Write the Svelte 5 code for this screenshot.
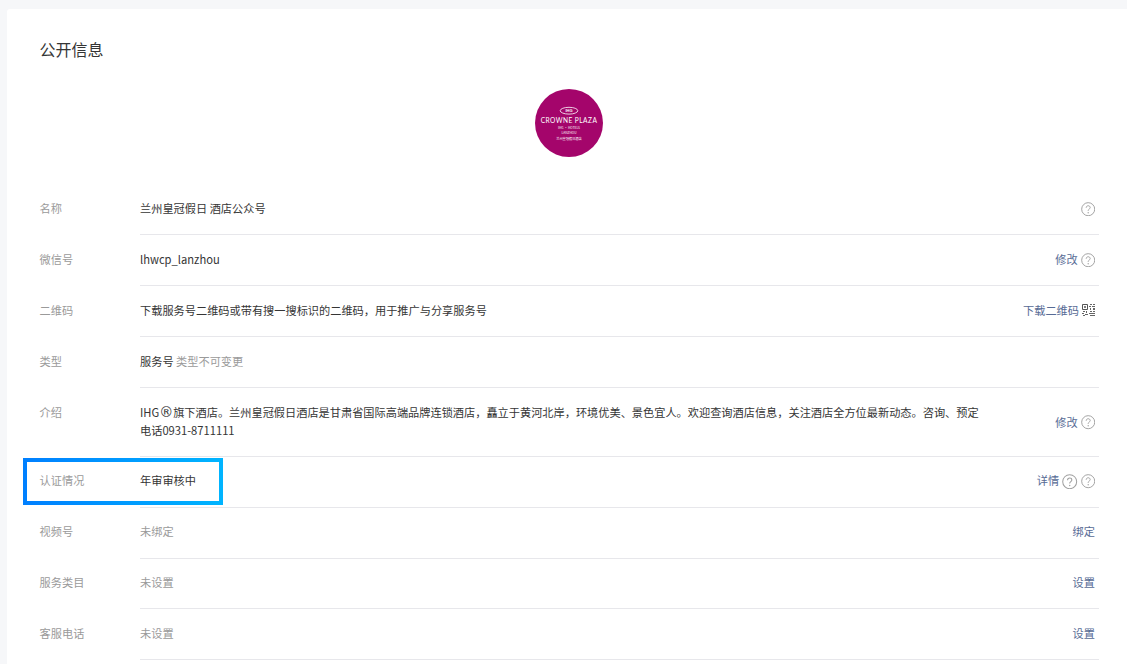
<script lang="ts">
  type Row = {
    label: string
    value: string
    muted?: boolean
    note?: string
    action?: string
    helps?: number
    qr?: boolean
    tall?: boolean
    boxed?: boolean
  }

  const rows: Row[] = [
    { label: '名称', value: '兰州皇冠假日 酒店公众号', helps: 1 },
    { label: '微信号', value: 'lhwcp_lanzhou', action: '修改', helps: 1 },
    { label: '二维码', value: '下载服务号二维码或带有搜一搜标识的二维码，用于推广与分享服务号', action: '下载二维码', qr: true },
    { label: '类型', value: '服务号', note: '类型不可变更' },
    {
      label: '介绍',
      value: 'IHG®旗下酒店。兰州皇冠假日酒店是甘肃省国际高端品牌连锁酒店，矗立于黄河北岸，环境优美、景色宜人。欢迎查询酒店信息，关注酒店全方位最新动态。咨询、预定电话0931-8711111',
      action: '修改',
      helps: 1,
      tall: true
    },
    { label: '认证情况', value: '年审审核中', action: '详情', helps: 2, boxed: true },
    { label: '视频号', value: '未绑定', muted: true, action: '绑定' },
    { label: '服务类目', value: '未设置', muted: true, action: '设置' },
    { label: '客服电话', value: '未设置', muted: true, action: '设置' }
  ]
</script>

<main class="page">
  <section class="card">
    <h2>公开信息</h2>

    <div class="avatar">
      <svg width="68" height="68" viewBox="0 0 68 68" role="img" aria-label="Crowne Plaza">
        <circle cx="34" cy="34" r="34" fill="#a4056b" />
        <ellipse cx="34" cy="21.7" rx="8.8" ry="3.4" fill="none" stroke="#fff" stroke-width="0.8" />
        <text x="34" y="23.2" class="logo-mark">IHG</text>
        <text x="34" y="33.6" class="logo-name">CROWNE PLAZA</text>
        <text x="34" y="39.6" class="logo-small">IHG · HOTELS</text>
        <text x="34" y="45.2" class="logo-small">LANZHOU</text>
        <text x="34" y="50.5" class="logo-small">兰州皇冠假日酒店</text>
      </svg>
    </div>

    <div class="list">
      {#each rows as row}
        <div class="row">
          {#if row.boxed}<span class="marker"></span>{/if}
          <div class="label">{row.label}</div>
          <div class="body">
            <div class="value" class:muted={row.muted} class:tall={row.tall}>
              {#each row.value.split('®') as part, i}{#if i}<span class="reg">®</span>{/if}{part}{/each}
              {#if row.note}<span class="note">{row.note}</span>{/if}
            </div>
            <div class="actions" class:low={row.tall}>
              {#if row.action}<a href="#top">{row.action}</a>{/if}
              {#if row.qr}
                <svg class="qr" width="13" height="12" viewBox="0 0 13 12" aria-hidden="true">
                  <path d="M.5.5h5v5h-5zM2.5 2.5h1v1h-1z" fill="none" stroke="#555" stroke-width="1" />
                  <path d="M8 0h2v1H8zM11 0h2v1h-2zM7 2h2v1H7zM10 2h3v1h-3zM8 4h1v2H8zM11 4h2v2h-2zM1 7h2v1H1zM4 7h1v2H4zM0 9h2v1H0zM3 10h3v1H3zM1 11h2v1H1zM8 7h2v1H8zM11 7h2v1h-2zM7 9h6v1H7zM8 11h5v1H8z" fill="#666" />
                </svg>
              {/if}
              {#each Array(row.helps ?? 0) as _, i}
                <svg class="help" class:big={row.helps === 2 && i === 0} viewBox="0 0 15 15" aria-hidden="true">
                  <circle cx="7.5" cy="7.5" r="6.8" fill="none" stroke="#a0a0a0" stroke-width="1" />
                  <path d="M5.4 6c0-1.3 1-2.1 2.1-2.1s2.1.8 2.1 1.9c0 1.5-2.1 1.6-2.1 3.2v.3" fill="none" stroke="#a0a0a0" stroke-width="1" />
                  <circle cx="7.5" cy="11.2" r="0.7" fill="#a0a0a0" />
                </svg>
              {/each}
            </div>
          </div>
        </div>
      {/each}
    </div>
  </section>
</main>

<style>
  :global(body) {
    margin: 0;
    height: 664px;
    overflow: hidden;
    background: #f6f7f9;
  }

  .page {
    padding: 9px 0 0 7px;
    font-family: "Noto Sans CJK SC", "Noto Sans", sans-serif;
    font-size: 11.2px;
    color: #353535;
  }

  .card {
    background: #fff;
    border-radius: 3px 0 0 0;
    padding: 28px 28px 0 33px;
    height: 640px;
  }

  h2 {
    margin: 0 0 0 -0.5px;
    font-size: 16px;
    font-weight: 400;
    line-height: 24px;
    color: #353535;
  }

  .avatar {
    display: flex;
    justify-content: center;
    padding: 28px 0 27.6px;
    margin-left: -1px;
  }

  .avatar svg {
    display: block;
  }

  .logo-mark,
  .logo-name,
  .logo-small {
    fill: #fff;
    text-anchor: middle;
  }

  .logo-mark {
    font-family: "Liberation Sans", sans-serif;
    font-size: 4px;
    font-weight: 700;
  }

  .logo-name {
    font-family: "Lato", sans-serif;
    font-size: 6.6px;
    letter-spacing: 0.45px;
  }

  .logo-small {
    font-size: 3.2px;
  }

  .row {
    position: relative;
    display: flex;
  }

  .label {
    width: 100px;
    flex: none;
    padding-top: 14.6px;
    line-height: 18px;
    color: #9a9a9a;
    margin-left: -0.4px;
    margin-right: 0.4px;
  }

  .body {
    flex: 1;
    display: flex;
    justify-content: space-between;
    align-items: center;
    padding: 14.6px 4px 17.25px 0;
    border-bottom: 1px solid #e7e7eb;
  }

  .value {
    line-height: 18px;
  }

  .value.tall {
    width: 842px;
  }

  .reg {
    font-family: "DejaVu Sans", sans-serif;
    font-size: 14px;
    line-height: 1;
  }

  .value.muted,
  .note {
    color: #9a9a9a;
  }

  .actions {
    display: flex;
    align-items: center;
    gap: 3px;
    height: 18px;
    margin-left: auto;
  }

  .actions.low {
    margin-top: 2px;
  }

  .actions a {
    color: #576b95;
    text-decoration: none;
  }

  .help,
  .qr {
    display: block;
    flex: none;
  }

  .help {
    width: 14.4px;
    height: 14.4px;
    margin-top: 2px;
  }

  .help.big {
    width: 15.4px;
    height: 15.4px;
  }

  .marker {
    position: absolute;
    left: -17px;
    top: 1px;
    width: 200px;
    height: 47px;
    box-sizing: border-box;
    border: 4px solid;
    border-image: linear-gradient(90deg, #0080ff, #00b4ff) 1;
    pointer-events: none;
  }
</style>
